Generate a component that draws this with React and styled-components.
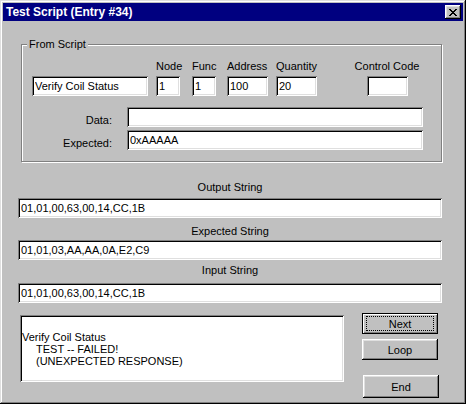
import React from "react";
import styled, { createGlobalStyle } from "styled-components";

const GlobalStyle = createGlobalStyle`
  html, body {
    margin: 0;
    padding: 0;
    background: #fff;
  }
  body {
    font-family: "Liberation Sans", Arial, sans-serif;
    font-size: 11px;
    color: #000;
  }
`;

// win95 bevels
const raised = `inset -1px -1px 0 #000, inset 1px 1px 0 #fff, inset -2px -2px 0 #808080, inset 2px 2px 0 #dfdfdf`;
const sunken = `inset 1px 1px 0 #808080, inset -1px -1px 0 #fff, inset 2px 2px 0 #000, inset -2px -2px 0 #dfdfdf`;

const Window = styled.div`
  width: 466px;
  height: 404px;
  box-sizing: border-box;
  padding: 3px;
  background: #c0c0c0;
  box-shadow: inset -1px -1px 0 #000, inset 1px 1px 0 #dfdfdf,
    inset -2px -2px 0 #808080, inset 2px 2px 0 #fff;
  display: flex;
  flex-direction: column;
`;

const TitleBar = styled.div`
  height: 18px;
  flex-shrink: 0;
  background: #000080;
  color: #fff;
  display: flex;
  align-items: center;
  justify-content: space-between;
  padding: 0 2px 0 3px;
  font-weight: bold;
  font-size: 12px;
`;

const CloseButton = styled.button`
  width: 16px;
  height: 14px;
  padding: 0;
  border: none;
  background: #c0c0c0;
  box-shadow: ${raised};
  display: flex;
  align-items: center;
  justify-content: center;
`;

const Content = styled.div`
  display: flex;
  flex-direction: column;
`;

const GroupBox = styled.div`
  position: relative;
  margin: 23px 0 0 18px;
  width: 421px;
  box-sizing: border-box;
  border: 1px solid #808080;
  box-shadow: inset 1px 1px 0 #fff, 1px 1px 0 #fff;
  padding: 15px 10px 11px 10px;
`;

const Legend = styled.span`
  position: absolute;
  top: -7px;
  left: 5px;
  padding: 0 2px;
  line-height: 13px;
  background: #c0c0c0;
`;

const FieldRow = styled.div`
  display: flex;
  align-items: flex-end;
`;

const Field = styled.div`
  display: flex;
  flex-direction: column;
  align-items: ${(p) => (p.$center ? "center" : "flex-start")};
  width: ${(p) => p.$w}px;
  margin-left: ${(p) => p.$ml || 0}px;
`;

const FieldLabel = styled.div`
  line-height: 13px;
  margin-bottom: 3px;
  white-space: nowrap;
`;

const Edit = styled.input`
  width: ${(p) => (p.$w ? `${p.$w}px` : "100%")};
  height: 20px;
  box-sizing: border-box;
  border: none;
  outline: none;
  margin: 0;
  padding: 0 3px;
  background: #fff;
  box-shadow: ${sunken};
  font-family: "Liberation Sans", Arial, sans-serif;
  font-size: 11px;
  color: #000;
`;

const DataGrid = styled.div`
  display: grid;
  grid-template-columns: 80px 296px;
  column-gap: 15px;
  row-gap: 3px;
  margin-top: 11px;
  align-items: end;
`;

const DataLabel = styled.div`
  text-align: right;
  line-height: 13px;
`;

const StringBlock = styled.div`
  margin-left: 15px;
  width: 424px;
  display: flex;
  flex-direction: column;
`;

const StringLabel = styled.div`
  text-align: center;
  line-height: 13px;
  margin-top: ${(p) => p.$mt}px;
  margin-bottom: ${(p) => p.$mb}px;
`;

const BottomRow = styled.div`
  display: flex;
  align-items: flex-start;
  margin: 10px 0 0 17px;
`;

const ListBox = styled.div`
  width: 324px;
  height: 67px;
  margin-top: 2px;
  box-sizing: border-box;
  background: #fff;
  box-shadow: ${sunken};
  padding: 4px 2px;
`;

const ListLine = styled.div`
  line-height: 12px;
  min-height: 12px;
  white-space: pre;
  padding-left: ${(p) => (p.$indent ? 14 : 0)}px;
`;

const ButtonColumn = styled.div`
  display: flex;
  flex-direction: column;
  margin-left: 18px;
  width: 77px;
`;

const PushButton = styled.button`
  width: 76px;
  height: ${(p) => p.$h}px;
  margin: ${(p) => p.$mt || 0}px 0 0 ${(p) => p.$ml || 0}px;
  padding: 3px 4px;
  border: none;
  background: #c0c0c0;
  box-shadow: ${(p) =>
    p.$default
      ? "inset 0 0 0 1px #000, inset 2px 2px 0 #fff, inset -2px -2px 0 #808080"
      : raised};
  display: flex;
  align-items: stretch;
  font-family: "Liberation Sans", Arial, sans-serif;
  font-size: 11px;
  color: #000;
`;

const Caption = styled.span`
  flex: 1;
  display: flex;
  align-items: center;
  justify-content: center;
  border: 1px dotted ${(p) => (p.$focus ? "#000" : "transparent")};
`;

function CloseGlyph() {
  return (
    <svg width="8" height="7" viewBox="0 0 8 7" shapeRendering="crispEdges">
      <path
        fill="#000"
        d="M0 0h2v1H0z M6 0h2v1H6z M1 1h2v1H1z M5 1h2v1H5z M2 2h4v1H2z M3 3h2v1H3z M2 4h4v1H2z M1 5h2v1H1z M5 5h2v1H5z M0 6h2v1H0z M6 6h2v1H6z"
      />
    </svg>
  );
}

const strings = [
  { label: "Output String", value: "01,01,00,63,00,14,CC,1B", mt: 19, mb: 4 },
  { label: "Expected String", value: "01,01,03,AA,AA,0A,E2,C9", mt: 7, mb: 2 },
  { label: "Input String", value: "01,01,00,63,00,14,CC,1B", mt: 4, mb: 6 },
];

export default function App() {
  return (
    <>
      <GlobalStyle />
      <Window>
        <TitleBar>
          <span>Test Script (Entry #34)</span>
          <CloseButton>
            <CloseGlyph />
          </CloseButton>
        </TitleBar>
        <Content>
          <GroupBox>
            <Legend>From Script</Legend>
            <FieldRow>
              <Field $w={116}>
                <Edit readOnly value="Verify Coil Status" />
              </Field>
              <Field $w={24} $ml={8}>
                <FieldLabel>Node</FieldLabel>
                <Edit readOnly value="1" />
              </Field>
              <Field $w={24} $ml={12}>
                <FieldLabel>Func</FieldLabel>
                <Edit readOnly value="1" />
              </Field>
              <Field $w={41} $ml={11}>
                <FieldLabel>Address</FieldLabel>
                <Edit readOnly value="100" />
              </Field>
              <Field $w={41} $ml={8}>
                <FieldLabel>Quantity</FieldLabel>
                <Edit readOnly value="20" />
              </Field>
              <Field $w={60} $ml={40} $center>
                <FieldLabel>Control Code</FieldLabel>
                <Edit readOnly value="" $w={41} />
              </Field>
            </FieldRow>
            <DataGrid>
              <DataLabel>Data:</DataLabel>
              <Edit readOnly value="" />
              <DataLabel>Expected:</DataLabel>
              <Edit readOnly value="0xAAAAA" />
            </DataGrid>
          </GroupBox>

          <StringBlock>
            {strings.map((s) => (
              <React.Fragment key={s.label}>
                <StringLabel $mt={s.mt} $mb={s.mb}>
                  {s.label}
                </StringLabel>
                <Edit readOnly value={s.value} />
              </React.Fragment>
            ))}
          </StringBlock>

          <BottomRow>
            <ListBox>
              <ListLine />
              <ListLine>Verify Coil Status</ListLine>
              <ListLine $indent>TEST -- FAILED!</ListLine>
              <ListLine $indent>(UNEXPECTED RESPONSE)</ListLine>
            </ListBox>
            <ButtonColumn>
              <PushButton $h={21} $default>
                <Caption $focus>Next</Caption>
              </PushButton>
              <PushButton $h={21} $mt={5}>
                <Caption>Loop</Caption>
              </PushButton>
              <PushButton $h={23} $mt={15} $ml={1}>
                <Caption>End</Caption>
              </PushButton>
            </ButtonColumn>
          </BottomRow>
        </Content>
      </Window>
    </>
  );
}
